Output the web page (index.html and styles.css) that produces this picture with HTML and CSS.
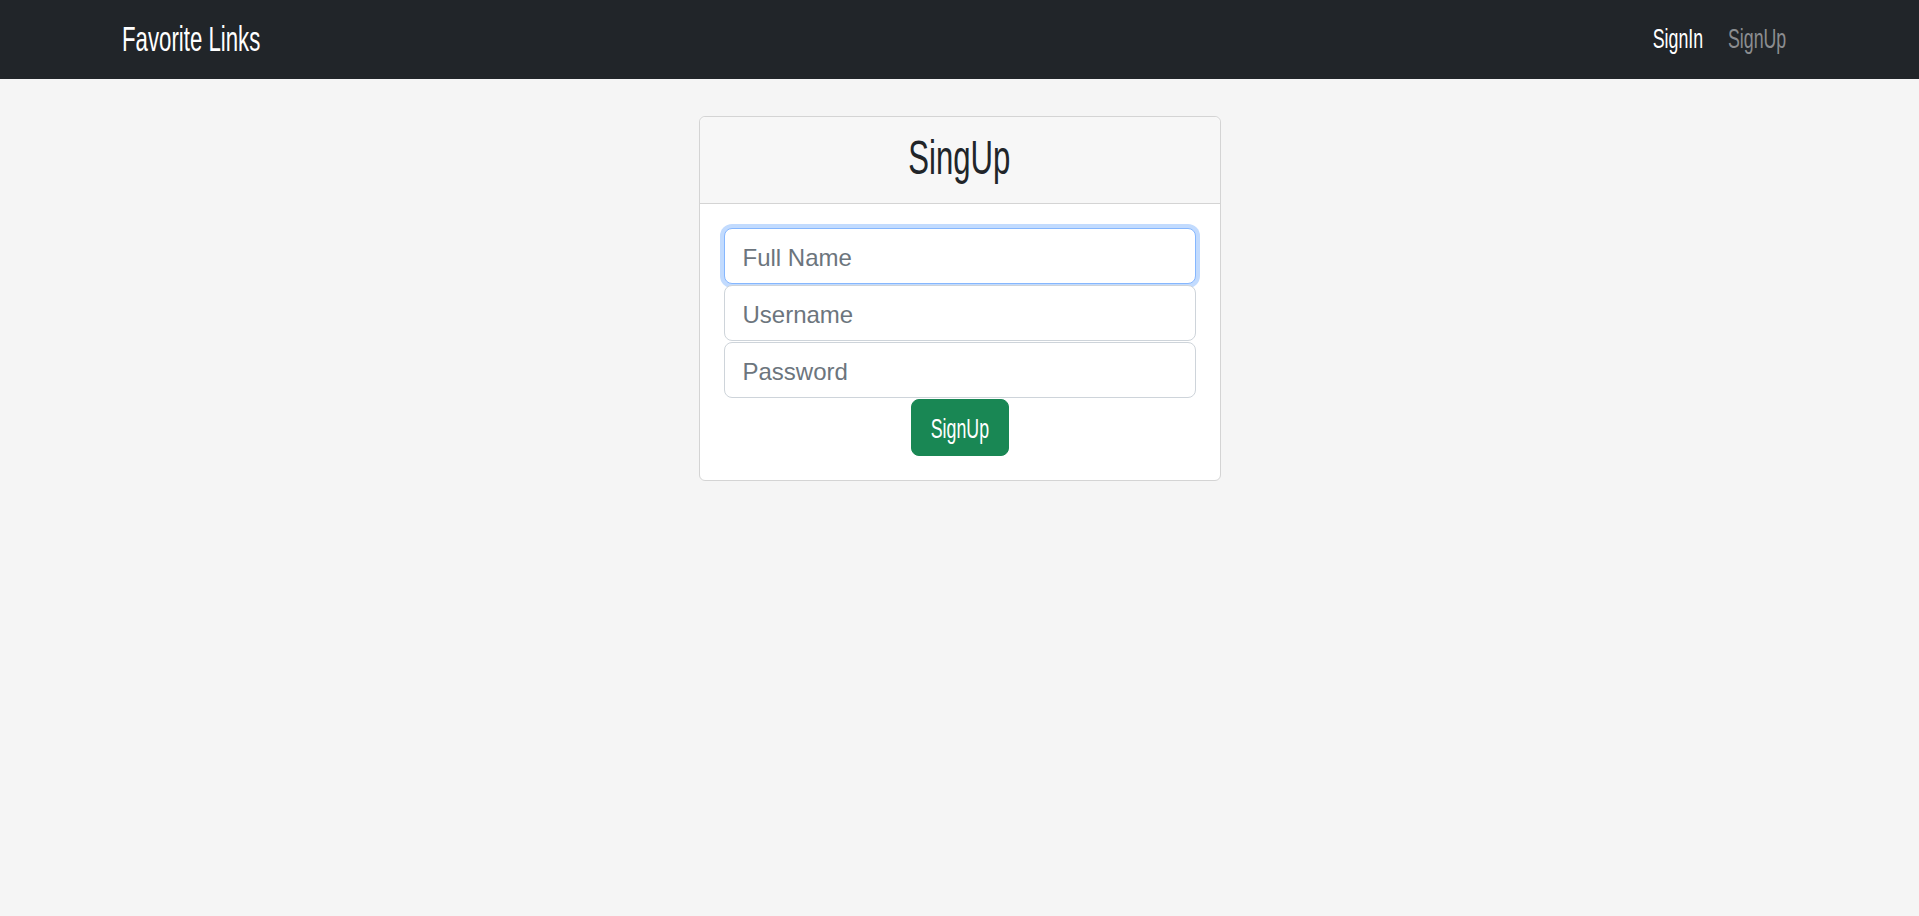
FILE: index.html
```html
<!DOCTYPE html>
<html lang="en">
<head>
<meta charset="utf-8">
<title>Favorite Links</title>
<link rel="stylesheet" href="styles.css">
</head>
<body>
<nav class="navbar">
  <a class="brand" href="#"><span class="narrow">Favorite Links</span></a>
  <div class="nav-links">
    <a class="nav-link active" href="#">SignIn</a>
    <a class="nav-link" href="#">SignUp</a>
  </div>
</nav>
<main class="page">
  <div class="card">
    <div class="card-header">
      <h1 class="card-title"><span class="narrow">SingUp</span></h1>
    </div>
    <form class="card-body">
      <input class="field is-focused" type="text" placeholder="Full Name" autofocus>
      <input class="field" type="text" placeholder="Username">
      <input class="field" type="password" placeholder="Password">
      <button class="btn" type="button"><span class="narrow">SignUp</span></button>
    </form>
  </div>
</main>
</body>
</html>
```
FILE: styles.css
```css
* { box-sizing: border-box; }
html, body { margin: 0; padding: 0; }
body {
  background: #f5f5f5;
  font-family: "Liberation Sans", Arial, sans-serif;
  color: #212529;
  min-height: 916px;
}
.narrow {
  display: inline-block;
  transform: scaleX(0.635);
  transform-origin: center center;
  white-space: nowrap;
}
.navbar {
  height: 79px;
  background: #212529;
  display: flex;
  align-items: center;
  justify-content: space-between;
  padding: 0 133px 0 122px;
}
.brand {
  color: #fff;
  text-decoration: none;
  font-size: 35px;
  line-height: 1.15;
}
.brand .narrow { transform-origin: left center; }
.nav-links {
  display: flex;
  gap: 39px;
  transform: scaleX(0.635);
  transform-origin: right center;
}
.nav-link {
  color: #8b8d90;
  text-decoration: none;
  font-size: 28px;
  line-height: 1.15;
}
.nav-link.active { color: #fff; }
.page {
  display: flex;
  justify-content: center;
  padding-top: 37px;
}
.card {
  width: 522px;
  background: #fff;
  border: 1px solid #d4d4d4;
  border-radius: 6px;
}
.card-header {
  height: 87px;
  background: #f7f7f7;
  border-bottom: 1px solid #d4d4d4;
  border-radius: 6px 6px 0 0;
  display: flex;
  align-items: center;
  justify-content: center;
  padding-bottom: 6px;
}
.card-title {
  margin: 0;
  font-weight: 400;
  font-size: 49px;
  line-height: 1.15;
  color: #212529;
}
.card-body {
  padding: 24px;
  margin: 0;
  display: flex;
  flex-direction: column;
  align-items: center;
  gap: 1px;
}
.field {
  width: 100%;
  height: 56px;
  padding: 3px 18px 0;
  border: 1px solid #ced4da;
  border-radius: 8px;
  background: #fff;
  font-family: inherit;
  font-size: 24px;
  color: #212529;
  outline: none;
}
.field::placeholder { color: #6c757d; }
.field.is-focused, .field:focus {
  border-color: #86b7fe;
  box-shadow: 0 0 0 4px #c2dbfe;
}
.btn {
  width: 98px;
  height: 57px;
  padding: 4px 0 0;
  background: #198754;
  color: #fff;
  border: 1px solid #198754;
  border-radius: 8px;
  font-family: inherit;
  font-size: 28px;
  line-height: 1.15;
  display: flex;
  align-items: center;
  justify-content: center;
}
```
